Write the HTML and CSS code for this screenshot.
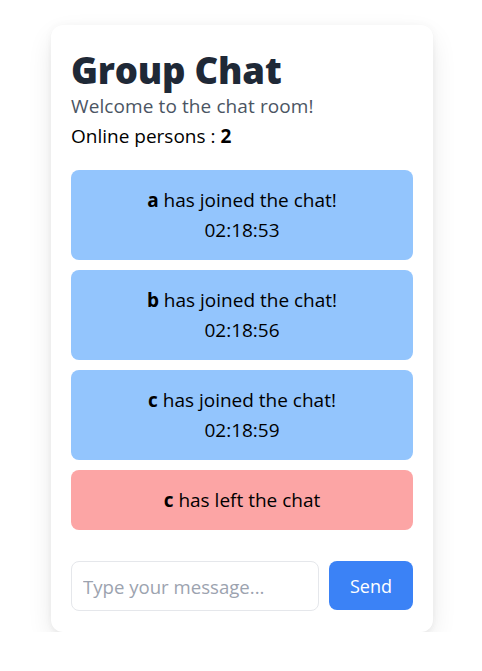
FILE: index.html
```html
<!DOCTYPE html>
<html lang="en">
<head>
<meta charset="utf-8">
<title>Group Chat</title>
<link rel="stylesheet" href="styles.css">
</head>
<body>
<div class="page">
  <div class="card">
    <h1 class="title">Group Chat</h1>
    <p class="subtitle">Welcome to the chat room!</p>
    <p class="online">Online persons : <b>2</b></p>
    <div class="messages">
      <div class="msg msg-join"><div><b>a</b> has joined the chat!</div><div>02:18:53</div></div>
      <div class="msg msg-join"><div><b>b</b> has joined the chat!</div><div>02:18:56</div></div>
      <div class="msg msg-join"><div><b>c</b> has joined the chat!</div><div>02:18:59</div></div>
      <div class="msg msg-leave"><div><b>c</b> has left the chat</div></div>
    </div>
    <form class="composer">
      <input class="input" type="text" placeholder="Type your message...">
      <button class="send" type="button">Send</button>
    </form>
  </div>
</div>
</body>
</html>
```
FILE: styles.css
```css
* { box-sizing: border-box; }
html, body { margin: 0; padding: 0; background: #ffffff; }
body {
  font-family: "Open Sans", "Noto Sans", "Liberation Sans", sans-serif;
  color: #111827;
}
.page {
  display: flex;
  justify-content: center;
  padding: 25px 0 0 2px;
}
.card {
  width: 382px;
  background: #fff;
  border-radius: 12px;
  padding: 24px 20px 21px;
  box-shadow: 0 10px 28px -4px rgba(0,0,0,0.12), 0 4px 8px -4px rgba(0,0,0,0.08), 0 0 10px rgba(0,0,0,0.03);
}
.title {
  margin: 0;
  font-size: 36.5px;
  line-height: 42px;
  font-weight: 800;
  color: #1f2937;
  letter-spacing: -0.2px;
}
.subtitle {
  margin: 0;
  font-size: 19px;
  line-height: 30px;
  letter-spacing: 0.1px;
  color: #4b5563;
}
.online {
  margin: 0;
  font-size: 19px;
  line-height: 30px;
  color: #000;
}
.online b { font-weight: 700; }
.messages {
  margin-top: 19px;
  display: flex;
  flex-direction: column;
  gap: 10px;
}
.msg {
  border-radius: 8px;
  padding: 15px 16px;
  text-align: center;
  font-size: 19px;
  line-height: 30px;
  color: #000;
}
.msg b { font-weight: 700; }
.msg-join { background: #93c5fd; }
.msg-leave { background: #fca5a5; }
.composer {
  margin: 31px 0 0;
  display: flex;
  gap: 10px;
}
.input {
  flex: 1;
  min-width: 0;
  height: 50px;
  border: 1px solid #e5e7eb;
  border-radius: 8px;
  padding: 0 11px;
  font-family: inherit;
  font-size: 18.6px;
  color: #111827;
  outline: none;
}
.input::placeholder { color: #9ca3af; }
.send {
  width: 84px;
  height: 49px;
  border: none;
  border-radius: 8px;
  background: #3b82f6;
  color: #fff;
  font-family: inherit;
  font-size: 18px;
  cursor: pointer;
}
```
